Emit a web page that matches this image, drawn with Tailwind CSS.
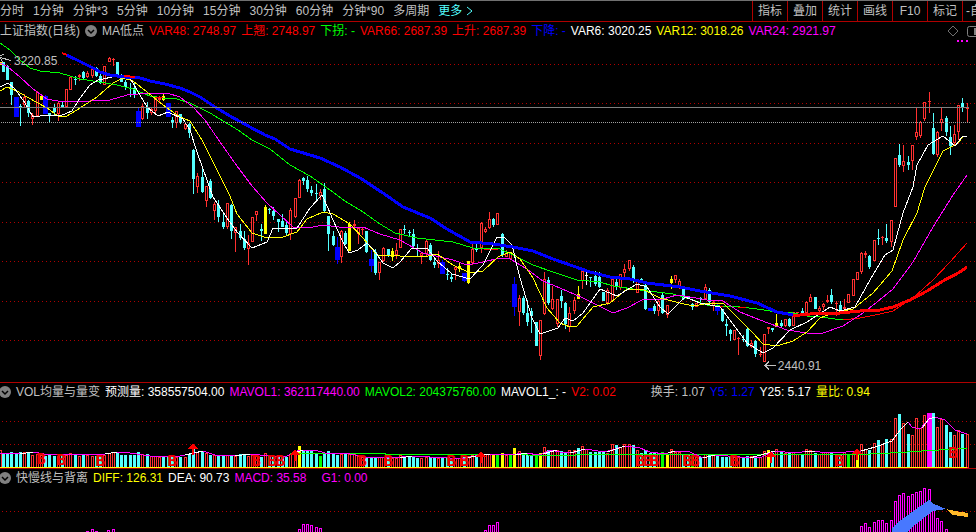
<!DOCTYPE html>
<html lang="zh-CN">
<head>
  <meta charset="UTF-8">
  <meta name="viewport" content="width=device-width, initial-scale=1">
  <title>上证指数(日线)</title>
  <script src="https://cdn.jsdelivr.net/npm/@tailwindcss/browser@4"></script>
</head>
<body class="bg-black text-[#c0c0c0] text-xs leading-4 font-['Liberation_Sans','Noto_Sans_CJK_SC',sans-serif] overflow-hidden">

  <!-- 周期工具栏 -->
  <nav class="flex h-[22px] border-t border-[#707070] border-b border-b-[#b00000] whitespace-nowrap">
    <div class="flex flex-1 items-center gap-[9px]">
      <button>分时</button>
      <button>1分钟</button>
      <button>分钟*3</button>
      <button>5分钟</button>
      <button>10分钟</button>
      <button>15分钟</button>
      <button>30分钟</button>
      <button>60分钟</button>
      <button>分钟*90</button>
      <button>多周期</button>
      <button class="flex items-center gap-1 text-[#54ffff]">更多
        <svg class="w-2 h-3" viewBox="0 0 8 12" fill="none" stroke="currentColor"><path d="M1 2l5 4-5 4"/></svg>
      </button>
    </div>
    <div class="flex">
      <button class="w-[35px] border-l border-[#b00000]">指标</button>
      <button class="w-[35px] border-l border-[#b00000]">叠加</button>
      <button class="w-[35px] border-l border-[#b00000]">统计</button>
      <button class="w-[35px] border-l border-[#b00000]">画线</button>
      <button class="w-[35px] border-l border-[#b00000]">F10</button>
      <button class="w-[35px] border-l border-[#b00000]">标记</button>
      <button class="w-[14px] border-l border-[#b00000] overflow-hidden text-left pl-[3px]">-自</button>
    </div>
  </nav>

  <!-- 主图 -->
  <section class="relative border-b border-[#b00000]">
    <header class="flex items-center gap-[5px] h-[18px] whitespace-nowrap">
      <h1>上证指数(日线)</h1>
      <button aria-label="主图指标" class="flex">
        <svg class="w-3 h-3" viewBox="0 0 12 12"><circle cx="6" cy="6" r="6" fill="#808080"/><path d="M3 5l3 3 3-3" fill="none" stroke="#000" stroke-width="1.5"/></svg>
      </button>
      <span>MA低点</span>
      <span class="text-[#ff0000]">VAR48: 2748.97</span>
      <span class="text-[#ff0000]">上翘: 2748.97</span>
      <span class="text-[#00ff00]">下拐: -</span>
      <span class="text-[#ff0000]">VAR66: 2687.39</span>
      <span class="text-[#ff0000]">上升: 2687.39</span>
      <span class="text-[#0000ff]">下降: -</span>
      <span class="text-white">VAR6: 3020.25</span>
      <span class="text-[#ffff00]">VAR12: 3018.26</span>
      <span class="text-[#ff00ff]">VAR24: 2921.97</span>
      <div class="ml-auto flex items-center gap-2">
        <svg class="w-3 h-3" viewBox="0 0 12 12" fill="none" stroke="#707070"><path d="M6 1l5 5-5 5-5-5z"/></svg>
        <svg class="w-[9px] h-3" viewBox="0 0 9 12"><path d="M9 1.5H2.500Q.5 1.500.5 3.500V9.500Q.5 11.500 2.500 11.500H9" fill="none" stroke="#808080"/><path d="M7 3h2v7H7z" fill="#808080"/></svg>
      </div>
    </header>
    <svg id="mainChart" class="block w-full h-[342px]" viewBox="0 40 976 342" preserveAspectRatio="none" shape-rendering="crispEdges" fill="none"></svg>
    <span class="absolute left-[14px] top-[31px]">3220.85</span>
    <span class="absolute left-[79.7%] top-[336px]">2440.91</span>
  </section>

  <!-- 成交量 -->
  <section class="border-b border-[#b00000]">
    <header class="flex items-center gap-[5px] h-[17px] -ml-px whitespace-nowrap">
      <button aria-label="成交量指标" class="flex">
        <svg class="w-3 h-3" viewBox="0 0 12 12"><circle cx="6" cy="6" r="6" fill="#808080"/><path d="M3 5l3 3 3-3" fill="none" stroke="#000" stroke-width="1.5"/></svg>
      </button>
      <h2>VOL均量与量变</h2>
      <span class="text-white">预测量: 358557504.00</span>
      <span class="text-[#ff00ff]">MAVOL1: 362117440.00</span>
      <span class="text-[#00ff00]">MAVOL2: 204375760.00</span>
      <span class="text-white">MAVOL1_: -</span>
      <span class="text-[#ff0000]">V2: 0.02</span>
      <span class="pl-[30px]">换手: 1.07</span>
      <span class="text-[#0000ff]">Y5: 1.27</span>
      <span class="text-white">Y25: 5.17</span>
      <span class="text-[#ffff00]">量比: 0.94</span>
    </header>
    <svg id="volChart" class="block w-full h-[68px] overflow-visible" viewBox="0 400 976 68" preserveAspectRatio="none" shape-rendering="crispEdges" fill="none"></svg>
  </section>

  <!-- MACD -->
  <section>
    <header class="flex items-center gap-[5px] h-[17px] -ml-px whitespace-nowrap">
      <button aria-label="MACD指标" class="flex">
        <svg class="w-3 h-3" viewBox="0 0 12 12"><circle cx="6" cy="6" r="6" fill="#808080"/><path d="M3 5l3 3 3-3" fill="none" stroke="#000" stroke-width="1.5"/></svg>
      </button>
      <h2>快慢线与背离</h2>
      <span class="text-[#ffff00]">DIFF: 126.31</span>
      <span class="text-white">DEA: 90.73</span>
      <span class="text-[#ff00ff]">MACD: 35.58</span>
      <span class="text-[#ff00ff] pl-[10px]">G1: 0.00</span>
    </header>
    <svg id="macdChart" class="block w-full h-[46px]" viewBox="0 486 976 46" preserveAspectRatio="none" shape-rendering="crispEdges" fill="none"></svg>
  </section>

  <script>
    const colors = { R: "#ff3030", C: "#54ffff", B: "#0000ff", Y: "#ffff00", W: "#ffffff", G: "#00ff00", M: "#ff00ff" };

    // 每根K线: x,最高,实体上,实体下,最低,颜色,成交量顶[,成交量颜色]
    const candles = `
      0,62,62,65,65,Y,450,R 3,62,62,72,72,C,453 7,65,66,80,80,C,453 11,82,82,95,105,C,452 16,97,97,117,117,B,454,C 20,104,106,107,126,C,452
      24,94,97,105,107,R,452 28,100,101,113,117,C,453 32,113,115,119,125,R,455 37,91,92,116,116,R,454 41,95,96,100,100,Y,455,R 45,95,96,114,114,B,456,C
      49,113,113,116,122,C,454 54,104,108,112,115,C,456 58,102,103,114,121,R,456 62,102,105,107,107,C,455 66,89,89,107,107,R,455 70,77,77,90,90,R,453
      75,76,79,80,85,C,454 79,74,75,77,81,R,456 83,71,72,78,79,C,455 87,71,73,77,78,R,455 92,67,69,76,78,R,456 96,67,68,76,77,C,456
      100,73,76,83,84,C,456 104,66,66,85,85,R,455 109,57,58,62,62,R,453 113,58,59,59,66,R,452 117,62,62,76,76,C,452 121,74,75,82,82,C,455
      125,80,82,87,90,C,455 130,83,88,89,97,C,455 134,82,88,95,98,C,455 138,108,111,127,127,B,452,C 142,104,106,119,120,R,454 147,102,107,113,119,C,454
      151,107,109,113,115,R,456 155,96,98,111,115,R,456 159,96,98,100,102,R,457 163,93,96,100,101,Y,457,C 168,103,103,117,117,B,456,C 172,117,120,123,128,C,456
      176,111,111,123,128,R,457 180,114,114,123,124,C,457 185,122,124,129,130,R,457 189,123,124,133,138,C,454 193,149,150,179,194,C,448 197,173,176,187,193,R,452
      202,166,177,192,193,C,452 206,186,186,201,207,R,453 210,179,181,198,199,C,455 214,202,204,211,220,R,455 218,200,205,217,222,C,455 223,212,222,227,229,C,455
      227,203,203,227,229,R,455 231,204,205,231,239,C,456 235,227,227,233,252,R,456 240,224,231,238,240,C,454 244,231,239,248,250,C,455 248,235,243,249,265,R,456
      252,217,217,242,242,R,455 256,211,211,215,221,R,456 261,224,229,231,241,C,457 265,205,207,234,234,Y,453,R 269,208,209,209,214,C,456 273,207,211,216,220,C,457
      278,219,219,222,232,C,457 282,214,221,227,227,C,457 286,220,225,233,235,C,457 290,208,210,234,240,R,454 295,198,198,217,218,R,452 299,179,180,198,198,R,446,Y
      303,177,178,181,185,C,450 307,176,180,189,192,C,451 311,186,190,193,196,C,451 316,184,193,194,202,C,454 320,189,192,196,200,R,456,G 324,183,189,211,212,C,454
      328,216,216,234,251,C,451 333,231,236,245,246,C,454 337,237,247,260,264,B,455,C 341,230,231,257,263,R,454 345,231,233,244,245,C,454 349,222,224,251,251,Y,454,R
      354,220,224,226,230,R,454 358,227,228,234,244,R,456 362,227,229,230,235,R,457 366,231,231,252,253,C,457 371,250,259,266,272,B,458,C 375,249,252,273,275,C,457
      379,262,262,273,280,R,457 383,247,248,261,262,R,457 388,249,249,255,257,C,457 392,248,251,257,261,Y,458,R 396,243,250,255,259,R,458 400,229,229,248,248,R,455
      404,225,229,230,234,C,457 409,230,232,233,237,C,457 413,229,234,246,247,C,457 417,244,248,249,257,C,458 421,252,253,256,264,R,458 426,240,241,254,256,R,457
      430,243,245,260,261,C,457 434,259,262,265,268,C,458 438,251,260,264,268,R,458 442,260,262,274,274,B,458,C 447,268,274,275,280,C,458 451,274,277,279,282,C,458
      455,267,267,270,280,R,458 459,262,266,269,272,Y,458,R 464,273,273,281,282,B,457,C 468,261,261,283,284,Y,456,R 472,243,249,263,265,R,455 476,244,248,250,252,C,456
      481,222,223,248,253,R,453 485,227,229,232,233,R,454 489,212,219,228,229,R,454 493,218,219,225,227,C,454,Y 497,213,213,225,225,R,454,G 502,233,234,255,257,C,453,Y
      506,250,253,257,257,R,455 510,252,252,259,260,R,455,G 514,277,284,307,316,B,448,Y 519,295,298,312,326,R,451 523,296,298,313,315,C,454 527,300,313,322,326,C,455
      531,308,311,316,333,C,455 536,322,322,346,346,C,455,G 540,320,320,356,360,R,453,Y 544,272,279,314,315,R,447 548,277,280,303,305,C,450 552,286,299,309,310,R,451
      557,299,299,324,327,R,450 561,290,296,301,308,C,451 565,302,303,324,329,C,452 569,307,313,327,332,R,450 574,297,300,311,314,R,450 578,286,294,299,299,Y,448,C
      582,271,271,281,289,R,446 586,272,275,276,285,W,449,R 590,277,277,278,287,C,452 595,271,276,284,286,C,452 599,272,277,287,288,C,451 603,292,292,301,301,C,452
      607,288,290,303,305,R,453 612,276,279,301,301,R,444 616,279,282,287,290,C,445 620,274,274,288,290,R,447 624,264,269,273,278,R,444 629,260,260,269,271,R,444
      633,265,267,281,283,C,445 637,281,281,293,293,R,450 641,278,279,281,283,C,453 645,283,285,309,310,C,450 650,308,308,311,311,B,453,C 654,304,306,311,314,C,453
      658,299,301,311,316,R,454 662,293,295,313,314,C,452,G 667,305,305,315,318,R,454,Y 671,276,279,283,289,Y,449,R 675,275,275,280,283,R,452 679,279,281,287,289,R,452
      683,288,289,299,300,C,454 688,296,296,298,299,C,455 692,303,304,307,310,C,455,G 696,303,303,307,307,R,457 700,297,298,299,302,C,457 705,284,287,299,300,R,454
      709,288,290,302,303,C,454 713,301,302,306,311,R,454 717,303,307,311,315,B,456,C 722,309,309,321,322,C,457 726,319,324,326,336,C,457 730,329,330,334,341,C,456
      734,330,330,340,340,R,457 738,337,338,339,355,R,457 743,335,339,340,342,C,457 747,328,329,346,347,C,456 751,340,343,347,348,R,456 755,340,341,354,357,C,456
      760,347,354,355,357,R,457 764,334,334,362,362,R,451 768,327,327,329,334,R,450,Y 772,328,328,330,332,C,453 776,314,323,327,327,Y,449,R 781,320,323,326,328,C,452
      785,319,319,326,327,R,453 789,318,319,326,327,C,453 793,312,312,326,326,R,452 797,312,312,313,313,R,454 802,308,311,316,316,C,454 806,301,302,313,313,R,449
      810,294,297,302,302,R,450 815,297,297,309,309,C,453 819,306,308,311,313,R,454 823,303,304,307,310,R,452 827,295,300,302,303,R,452 831,289,295,302,304,C,453
      836,301,303,304,316,R,454 840,301,305,310,311,C,454 844,299,307,309,310,R,452 848,294,294,303,303,R,454,G 853,279,279,296,296,R,454 857,272,272,280,280,R,453,Y
      861,252,253,272,274,R,444 865,251,253,255,258,R,449 869,255,256,267,269,C,450 874,240,240,261,261,R,443 878,229,238,239,245,C,440 882,236,237,238,245,R,444
      886,224,238,241,243,C,439 891,220,220,242,247,R,439 895,158,158,207,207,R,418 899,144,155,165,167,C,414 903,145,161,166,172,R,423 908,156,162,165,170,C,434
      912,145,145,161,170,R,435 916,108,132,137,140,R,418 920,121,122,136,138,R,428 924,102,102,119,121,R,415 929,92,101,102,113,R,413,M 933,113,128,154,155,C,413
      937,131,132,155,157,R,427 941,108,119,123,131,R,419 946,116,118,132,136,C,425 950,126,137,146,155,C,432 954,125,134,143,145,R,435 958,105,105,132,140,R,430
      962,98,103,107,112,C,434 967,103,107,109,123,R,434`
      .trim().split(/\s+/).map(row => row.split(",").map(v => isNaN(v) ? v : Number(v)));

    const rect = (x, y, w, h, color) => `<rect x="${x}" y="${y}" width="${w}" height="${Math.max(h, 1)}" fill="${color}"/>`;
    const box = (x, y, w, h, color) => `<rect x="${x + 0.5}" y="${y + 0.5}" width="${w - 1}" height="${Math.max(h - 1, 1)}" fill="#000" stroke="${color}"/>`;
    const line = (points, color, width = 1) => `<polyline points="${points}" stroke="${color}" stroke-width="${width}"/>`;
    const grid = y => `<path d="M2 ${y + 0.5}H976" stroke="#b00000" stroke-dasharray="1 3"/>`;

    // 主图: 网格 + K线 + 均线
    function drawMain() {
      let out = [64, 103, 143, 182, 222, 261, 301, 340].map(grid).join("");
      candles.forEach(([x, high, top, bottom, low, c]) => {
        out += rect(x, high, 1, low - high, colors[c]);
        if (c === "R" && bottom - top > 2) out += box(x - 1, top, 3, bottom - top, colors[c]);
        else if (c === "B") out += rect(x - 2, top, 5, bottom - top, colors[c]);
        else out += rect(x - 1, top, 3, bottom - top, colors[c]);
      });
      // 绿线
      out += line("0,43 10,50 20,60 30,68 40,71 60,73 80,79 100,82 117,85 133,89 150,96 163,98 177,99 190,103 210,113 238,130 252,140 270,149 290,165 310,176 330,190 345,201 363,212 380,224 395,233 417,238 453,242 473,248 500,249 513,255 533,265 553,272 577,280 600,282 613,286 640,290 673,294 693,300 707,305 720,306 740,307 757,309 777,312 793,313 807,316 820,317 843,320", "#00ff00");
      out += line("155,97 163,98", "#ff0000") + line("484,249 498,249", "#ff0000") + line("716,306 723,306", "#ff0000") + line("738,307 746,307", "#ff0000");
      out += line("843,320 860,318 880,314 893,311 913,298 933,280 950,262 967,243", "#ff0000");
      // 紫线
      out += line("0,63 8,67 20,77 33,89 47,99 63,102 90,101 110,100 127,95 150,93 167,93 180,97 193,107 205,120 220,142 237,166 252,186 267,203 293,227 313,227 323,225 347,228 363,227 380,234 400,240 423,253 440,257 453,260 467,265 483,262 500,258 510,259 527,269 543,281 560,288 583,298 613,313 627,308 642,300 663,299 677,295 690,297 707,300 723,301 740,312 760,320 787,330 807,333 823,333 843,326 863,313 877,302 893,289 913,262 933,227 953,195 967,175", "#ff00ff");
      // 黄线
      out += line("0,91 7,87 17,91 27,97 38,103 47,108 58,116 67,116 80,108 97,97 113,83 123,78 133,81 147,92 163,105 180,117 190,121 202,140 217,170 230,196 237,214 252,233 267,238 283,237 297,232 307,219 323,212 333,214 350,224 363,238 377,255 400,256 423,257 437,254 453,265 470,273 483,271 498,257 510,252 520,259 533,278 547,308 560,323 570,327 577,326 593,307 610,303 627,289 642,289 660,298 680,303 693,306 710,303 723,303 737,317 753,333 763,344 777,346 793,341 807,332 820,318 830,314 853,309 873,293 892,271 903,240 917,213 925,187 943,151 957,144 963,137 967,136", "#ffff00");
      // 白线
      out += line("0,87 8,83 15,89 25,103 33,117 47,115 60,116 72,111 80,98 90,85 98,80 117,76 130,78 137,90 147,107 158,116 168,112 183,119 190,130 197,152 213,197 227,218 237,232 252,248 267,242 273,228 297,228 310,208 322,195 328,208 333,220 343,242 349,253 358,250 367,243 373,249 383,263 393,268 400,262 412,248 427,248 437,261 452,274 470,279 483,265 497,237 505,238 512,245 520,278 532,318 540,334 558,328 565,318 573,321 583,313 600,289 617,296 637,284 647,287 660,307 668,314 685,297 700,303 720,307 730,320 747,343 763,353 773,348 790,330 807,322 830,307 840,311 855,307 870,280 885,255 893,250 903,213 913,187 917,165 928,145 943,136 955,146 962,137 967,136", "#ffffff");
      // 蓝/红粗线
      out += line("66,55 75,59 85,64 95,69 100,72 110,75 125,77 137,77 150,81 165,84 180,88 190,92 200,97 215,107 230,116 250,127 265,135 275,139 290,149 310,155 320,158 340,167 360,178 383,193 403,207 430,218 447,229 470,242 493,244 513,247 533,251 553,259 573,266 590,272 610,277 630,279 647,283 680,287 700,291 730,296 757,303 777,312 793,315", "#0000ff", 3);
      out += line("62,53 67,55", "#ff0000", 2) + line("124,76 135,77", "#ff0000", 2);
      out += line("793,315 800,315 820,313 840,313 860,311 880,310 893,307 910,300 927,291 943,281 960,272 967,267", "#ff0000", 3);
      // 参考线和高低点箭头
      out += `<path d="M0 107.5H969" stroke="#808080"/><path d="M1 122.5H970" stroke="#a0a0a0" stroke-dasharray="1 1"/>`;
      out += `<path d="M0 57.500L11 60.500M0 55.500L4 54.500M0 57.500L3 62.500M765 365.500H776M769 361.500L765 365.500L769 369.500" stroke="#c0c0c0"/>`;
      out += rect(957, 40, 2, 2, colors.M) + rect(961, 40, 2, 2, colors.M) + rect(966, 40, 2, 2, colors.M);
      document.getElementById("mainChart").innerHTML = out;
    }

    function drawVolume() {
      let out = grid(421) + grid(444);
      candles.forEach(([x, , , , , c, top, vc]) => {
        const color = colors[vc || c];
        if ((vc || c) === "R") out += box(x - 1, top, 3, 468 - top, color);
        else if (vc === "M") out += rect(x - 2, top, 5, 467 - top, color);
        else out += rect(x - 1, top, 3, 467 - top, color);
      });
      out += line("290,453.500 385,453.500 386,454.500 480,454.500 575,455.500 576,454.500 860,454.500 880,453.500 900,452.500 930,450.500 967,448.500", "#00ff00");
      out += line("0,453 20,454 33,452 50,455 70,454 90,455 105,454 117,452 130,453 150,456 175,457 185,455 195,453 203,451 215,455 235,456 250,454 260,455 285,457 293,453 299,450 315,450 325,453 350,454 365,457 395,458 410,456 450,458 465,458 475,456 490,454 510,455 525,453 540,455 550,450 565,453 575,452 585,449 605,452 625,446 640,448 650,452 665,454 675,451 690,452 703,458 715,455 740,457 762,457 775,451 795,453 810,451 830,453 846,452 861,451 875,447 892,441 901,429 908,422 912,427 920,429 929,419 935,417 945,420 955,430 967,434", "#ff00ff");
      // 放量段用白线
      ["20,454 33,452", "105,454 117,452", "185,455 203,451", "235,456 250,454", "293,453 303,450", "400,458 412,456", "465,458 490,454", "515,455 527,453", "543,454 557,450", "570,453 585,449", "607,452 625,446", "668,453 675,451", "703,458 715,455", "750,458 775,451", "805,452 815,451", "861,451 875,447 892,441 901,429 908,422", "922,428 929,419 935,417"]
        .forEach(p => out += line(p, "#ffffff"));
      out += rect(0, 467, 967, 1, colors.Y);
      [[41, 464], [61, 465], [100, 466], [172, 466], [256, 466], [272, 466], [280, 466], [362, 466], [388, 466], [451, 466], [464, 466], [640, 466], [648, 466], [654, 466], [687, 466], [695, 466], [734, 466], [839, 466], [953, 458]]
        .forEach(([x, y]) => out += `<text x="${x}" y="${y}" text-anchor="middle" font-family="Liberation Mono" font-weight="bold" font-size="16" fill="#f00000">B</text>`);
      [[193, 443], [295, 449], [481, 451], [771, 451], [857, 448]]
        .forEach(([x, y]) => out += `<path d="M${x} ${y}l5 6h-4v6h-2v-6h-4z" fill="#ff0000"/>`);
      document.getElementById("volChart").innerHTML = out;
    }

    function drawMacd() {
      let out = grid(511);
      const bars = [[87, 531], [92, 529], [96, 531], [108, 530], [113, 529], [299, 529], [303, 524], [307, 524], [311, 525], [316, 527], [320, 528],
        [485, 530], [489, 525], [493, 525], [497, 522], [861, 526], [865, 523], [869, 527], [874, 522], [878, 520], [882, 520], [886, 523], [891, 520],
        [895, 501], [899, 495], [903, 493], [908, 496], [912, 494], [916, 492], [920, 491], [924, 488], [929, 489], [933, 508], [937, 518], [941, 521], [946, 529]];
      bars.forEach(([x, top]) => out += box(x - 1, top, 3, 536 - top, colors.M));
      out += `<path d="M892 532V528L898 522L929 500L934 504L946 509L933 511L916 524L907 532Z" fill="#4878ff"/>`;
      out += `<path d="M946 509L955 511L968 513V517L953 515Z" fill="#ffb828"/>`;
      document.getElementById("macdChart").innerHTML = out;
    }

    drawMain();
    drawVolume();
    drawMacd();
  </script>
</body>
</html>
